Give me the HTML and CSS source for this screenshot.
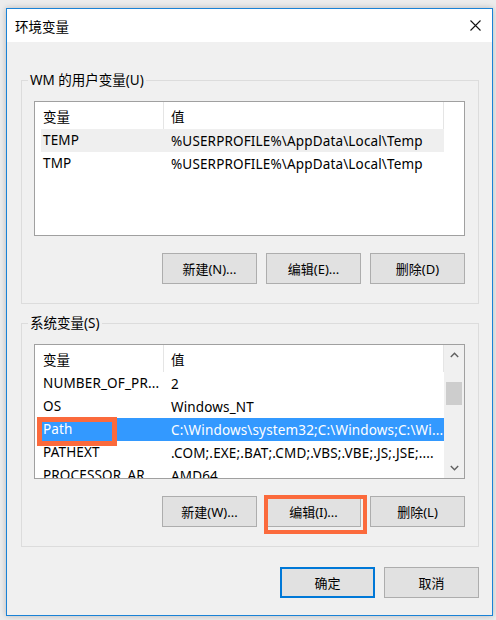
FILE: index.html
```html
<!DOCTYPE html>
<html lang="zh-CN">
<head>
<meta charset="utf-8">
<title>环境变量</title>
<link rel="stylesheet" href="styles.css">
</head>
<body>
<div class="window">
  <div class="titlebar">
    <span class="title">环境变量</span>
    <span class="close">
      <svg width="11" height="11" viewBox="0 0 11 11"><path d="M0.5 0.5 L10.5 10.5 M10.5 0.5 L0.5 10.5" stroke="#111" stroke-width="1.1" fill="none"/></svg>
    </span>
  </div>
  <div class="content">
    <div class="group">
      <span class="legend">WM 的用户变量(U)</span>
      <div class="list">
        <div class="list-main">
          <div class="head">
            <div class="hcell c1">变量</div>
            <div class="hcell c2">值</div>
          </div>
          <div class="row hover"><span class="c1">TEMP</span><span class="c2">%USERPROFILE%\AppData\Local\Temp</span></div>
          <div class="row"><span class="c1">TMP</span><span class="c2">%USERPROFILE%\AppData\Local\Temp</span></div>
        </div>
        <div class="head-tail"></div>
      </div>
      <div class="btns">
        <button class="btn">新建(N)...</button>
        <button class="btn">编辑(E)...</button>
        <button class="btn">删除(D)</button>
      </div>
    </div>

    <div class="group second">
      <span class="legend">系统变量(S)</span>
      <div class="list">
        <div class="list-main">
          <div class="head">
            <div class="hcell c1">变量</div>
            <div class="hcell c2">值</div>
          </div>
          <div class="row"><span class="c1">NUMBER_OF_PR...</span><span class="c2">2</span></div>
          <div class="row"><span class="c1">OS</span><span class="c2">Windows_NT</span></div>
          <div class="row selected"><span class="c1">Path<span class="mark mark-path"></span></span><span class="c2">C:\Windows\system32;C:\Windows;C:\Wi...</span></div>
          <div class="row"><span class="c1">PATHEXT</span><span class="c2">.COM;.EXE;.BAT;.CMD;.VBS;.VBE;.JS;.JSE;....</span></div>
          <div class="row"><span class="c1">PROCESSOR_AR...</span><span class="c2">AMD64</span></div>
        </div>
        <div class="scrollbar">
          <div class="sb-btn"><svg width="9" height="6" viewBox="0 0 9 6"><path d="M0.8 5 L4.5 1.2 L8.2 5" stroke="#606060" stroke-width="1.4" fill="none"/></svg></div>
          <div class="sb-track"><div class="sb-thumb"></div></div>
          <div class="sb-btn"><svg width="9" height="6" viewBox="0 0 9 6"><path d="M0.8 1 L4.5 4.8 L8.2 1" stroke="#606060" stroke-width="1.4" fill="none"/></svg></div>
        </div>
      </div>
      <div class="btns">
        <button class="btn">新建(W)...</button>
        <button class="btn marked">编辑(I)...<span class="mark mark-btn"></span></button>
        <button class="btn">删除(L)</button>
      </div>
    </div>

    <div class="footer">
      <button class="btn default">确定</button>
      <button class="btn">取消</button>
    </div>
  </div>
</div>
</body>
</html>
```

FILE: styles.css
```css
html, body {
  margin: 0;
  padding: 0;
}
body {
  background: #ececec;
  padding: 8px 4px 4px 6px;
  font-family: "Noto Sans", "Noto Sans CJK SC", sans-serif;
  font-size: 13px;
  color: #000;
  width: 496px;
  height: 620px;
  box-sizing: border-box;
  overflow: hidden;
}
.window {
  width: 485px;
  border: 1px solid #1a82d6;
  background: #f0f0f0;
  box-shadow: 0 0 6px rgba(0, 0, 0, 0.22);
  display: flex;
  flex-direction: column;
}
.titlebar {
  height: 33px;
  background: #fff;
  display: flex;
  align-items: center;
  justify-content: space-between;
}
.title {
  padding-left: 8px;
  font-size: 13.5px;
  color: #000;
}
.close {
  width: 34px;
  height: 33px;
  display: flex;
  align-items: center;
  justify-content: center;
}
.close svg { display: block; }
.content {
  display: flex;
  flex-direction: column;
  padding: 38px 13px 17px 14px;
}
.group {
  position: relative;
  border: 1px solid #dcdcdc;
  padding: 20px 13px 19px 12px;
  display: flex;
  flex-direction: column;
}
.group.second {
  margin-top: 19px;
}
.legend {
  position: absolute;
  left: 6px;
  top: -10px;
  line-height: 18px;
  padding: 0 2px;
  background: #f0f0f0;
  font-size: 13.5px;
}
.list {
  height: 135px;
  box-sizing: border-box;
  border: 1px solid #a0a0a0;
  background: #fff;
  display: flex;
  overflow: hidden;
}
.list-main {
  width: 409px;
  display: flex;
  flex-direction: column;
  position: relative;
}
.head {
  height: 27px;
  display: flex;
  flex-shrink: 0;
}
.hcell {
  display: flex;
  align-items: center;
  box-sizing: border-box;
  font-size: 13.5px;
}
.head .c1 {
  width: 129px;
  padding-left: 8px;
  border-right: 1px solid #e5e5e5;
}
.head .c2 {
  flex: 1;
  padding-left: 7px;
  border-right: 1px solid #e5e5e5;
}
.head-tail {
  width: 20px;
  height: 27px;
}
.row {
  height: 23px;
  flex-shrink: 0;
  margin-left: 6px;
  display: flex;
  align-items: center;
  white-space: nowrap;
  font-size: 13.5px;
  letter-spacing: 0.15px;
}
.row .c1 {
  width: 123px;
  flex-shrink: 0;
  padding-left: 2px;
  box-sizing: border-box;
  position: relative;
  height: 23px;
  line-height: 23px;
}
.row .c2 {
  padding-left: 7px;
  flex: 1;
  min-width: 0;
  overflow: hidden;
}
.row.hover {
  background: #efefef;
}
.row.selected {
  background: #3399ff;
  color: #fff;
}
.scrollbar {
  width: 20px;
  background: #f0f0f0;
  display: flex;
  flex-direction: column;
}
.sb-btn {
  height: 20px;
  display: flex;
  align-items: center;
  justify-content: center;
}
.sb-btn svg { display: block; }
.sb-track {
  flex: 1;
  padding: 17px 2px 0 2px;
}
.sb-thumb {
  height: 23px;
  background: #cdcdcd;
}
.btns {
  display: flex;
  justify-content: flex-end;
  gap: 9px;
  margin-top: 17px;
}
.btn {
  position: relative;
  width: 95px;
  height: 31px;
  box-sizing: border-box;
  border: 1px solid #adadad;
  background: #e1e1e1;
  font-family: "Noto Sans", "Noto Sans CJK SC", sans-serif;
  font-size: 13px;
  color: #000;
  padding: 0;
  margin: 0;
}
.btn.default {
  border: 2px solid #0078d7;
}
.footer {
  display: flex;
  justify-content: flex-end;
  gap: 9px;
  margin-top: 20px;
}
.mark {
  position: absolute;
  border: 5px solid #fb6a3c;
  box-sizing: border-box;
  pointer-events: none;
}
.mark-path {
  left: -4px;
  top: -1px;
  width: 80px;
  height: 29px;
}
.mark-btn {
  border-width: 4px;
  left: -3px;
  top: -2px;
  width: 103px;
  height: 39px;
}
```
